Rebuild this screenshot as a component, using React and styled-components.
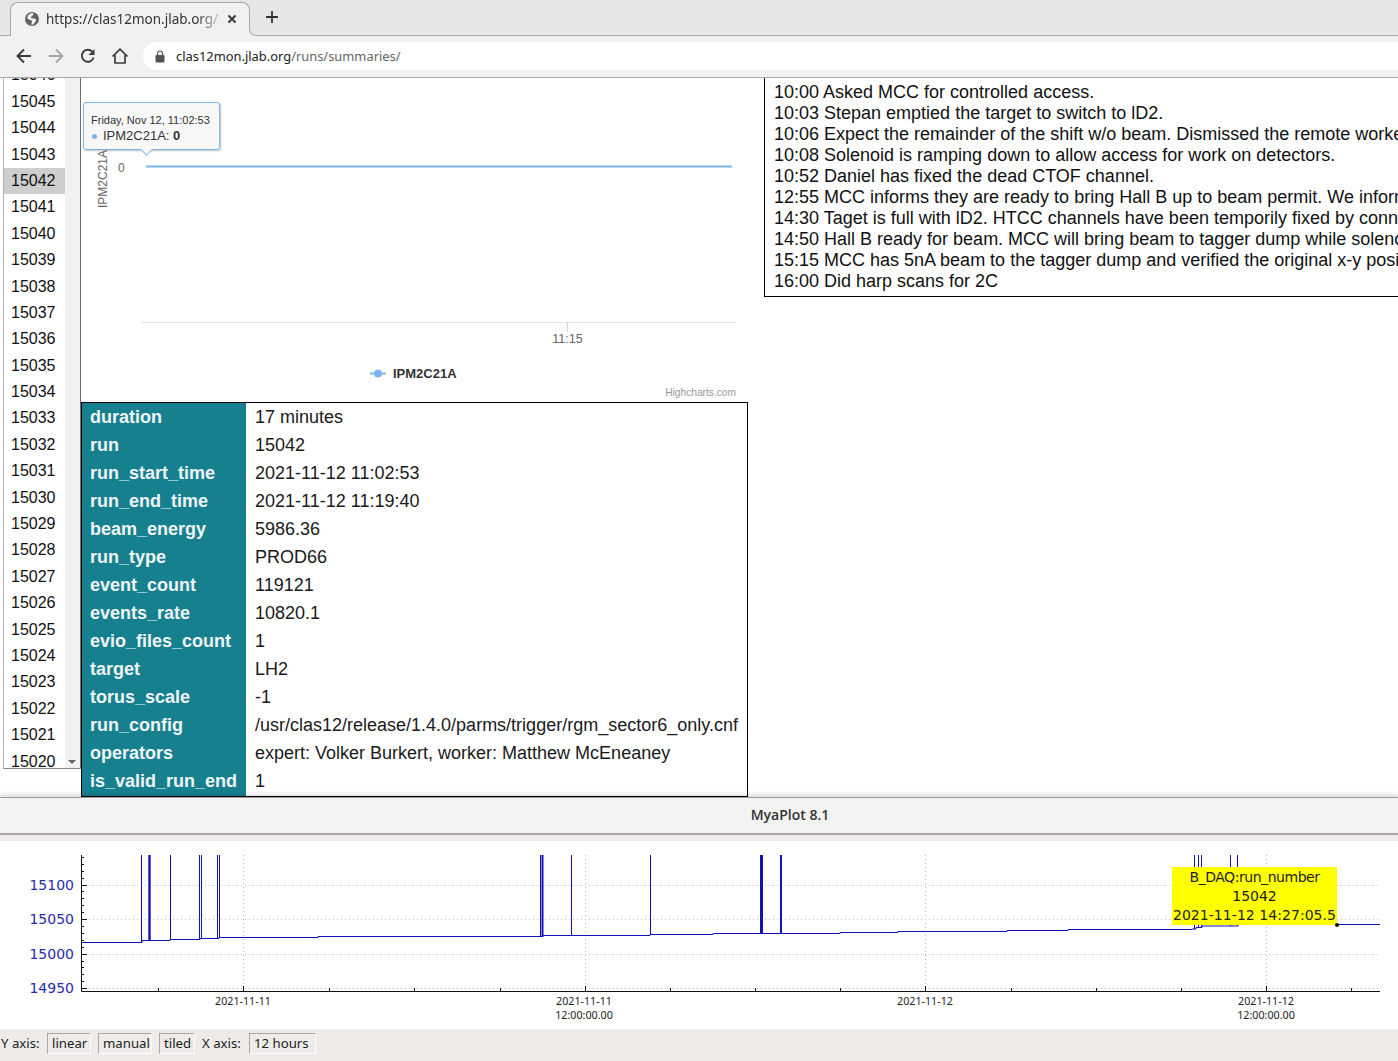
import React from 'react';
import styled, { createGlobalStyle } from 'styled-components';

const GlobalStyle = createGlobalStyle`
  html, body {
    margin: 0;
    padding: 0;
    width: 1398px;
    height: 1061px;
    overflow: hidden;
    background: #fff;
  }
`;

const Page = styled.div`
  width: 1398px;
  height: 1061px;
  display: flex;
  flex-direction: column;
  overflow: hidden;
  font-family: "Liberation Sans", Arial, sans-serif;
`;

/* browser chrome */
const Chrome = styled.div`
  height: 78px;
  flex: none;
  display: flex;
  flex-direction: column;
  background: #f1f1f1;
  border-bottom: 1px solid #a8a8a8;
  box-sizing: border-box;
  font-family: "Noto Sans", sans-serif;
`;

const TabStrip = styled.div`
  height: 36px;
  flex: none;
  display: flex;
  align-items: flex-end;
  padding-left: 10px;
  gap: 16px;
  background: #e6e6e4;
  border-bottom: 1px solid #a9a9a9;
  box-sizing: border-box;
`;

const Tab = styled.div`
  width: 240px;
  height: 34px;
  margin-bottom: -1px;
  box-sizing: border-box;
  display: flex;
  align-items: center;
  padding: 0 6px 2px 13px;
  gap: 6px;
  background: #f1f1f1;
  border: 1px solid #a9a9a9;
  border-bottom: none;
  border-radius: 8px 8px 0 0;
  position: relative;
  &::before {
    content: '';
    position: absolute;
    right: -7px;
    bottom: 0;
    width: 7px;
    height: 7px;
    background: #f1f1f1;
  }
  &::after {
    content: '';
    position: absolute;
    right: -8px;
    bottom: 0;
    width: 7px;
    height: 7px;
    background: #e6e6e4;
    border-left: 1px solid #a9a9a9;
    border-bottom: 1px solid #a9a9a9;
    border-bottom-left-radius: 7px;
  }
`;

const TabTitle = styled.div`
  width: 175px;
  font-size: 13.5px;
  color: #333;
  white-space: nowrap;
  overflow: hidden;
  mask-image: linear-gradient(to right, #000 86%, rgba(0, 0, 0, 0.15) 100%);
`;

const NewTab = styled.div`
  height: 34px;
  box-sizing: border-box;
  padding-bottom: 2px;
  display: flex;
  align-items: center;
`;

const Toolbar = styled.div`
  flex: 1;
  display: flex;
  align-items: center;
  padding: 0 0 1px 15px;
  gap: 14px;
`;

const NavIcon = styled.svg`
  flex: none;
  display: block;
`;

const Omnibox = styled.div`
  flex: 1;
  height: 28px;
  display: flex;
  align-items: center;
  padding-left: 12px;
  gap: 11px;
  background: #fff;
  border-radius: 14px 0 0 14px;
  font-size: 12.9px;
  color: #222;
`;

const UrlPath = styled.span`
  color: #666;
`;

/* web page part */
const WebArea = styled.div`
  height: 719px;
  flex: none;
  display: flex;
  background: #fff;
  overflow: hidden;
`;

const ListFrame = styled.div`
  width: 78px;
  height: 691px;
  flex: none;
  margin-left: 3px;
  box-sizing: border-box;
  display: flex;
  border-left: 1px solid #b5b5b5;
  border-right: 1px solid #6f6f6f;
  border-bottom: 1px solid #8a8a8a;
  overflow: hidden;
  position: relative;
`;

const RunList = styled.div`
  width: 61px;
  flex: none;
  margin-top: -15.6px;
`;

const RunItem = styled.div`
  height: 26.4px;
  line-height: 26.4px;
  padding-left: 7px;
  font-size: 16px;
  color: #111;
  background: ${(p) => (p.$selected ? '#cecece' : 'transparent')};
`;

const ScrollTrack = styled.div`
  flex: 1;
  background: #f1f1f1;
`;

const ScrollArrow = styled.div`
  position: absolute;
  right: 4px;
  bottom: 4px;
  width: 0;
  height: 0;
  border-left: 4px solid transparent;
  border-right: 4px solid transparent;
  border-top: 4px solid #666;
`;

const MiddleColumn = styled.div`
  width: 667px;
  flex: none;
  display: flex;
  flex-direction: column;
`;

const ChartBox = styled.div`
  height: 324px;
  flex: none;
  position: relative;
  background: #fff;
`;

const ChartSvg = styled.svg`
  display: block;
  font-family: "Liberation Sans", Arial, sans-serif;
`;

const Tooltip = styled.div`
  position: absolute;
  left: 2px;
  top: 24px;
  width: 137px;
  height: 48px;
  box-sizing: border-box;
  padding: 11px 0 0 7px;
  background: rgba(247, 247, 247, 0.88);
  border: 1px solid #7cb5ec;
  border-radius: 3px;
  box-shadow: 1px 1px 2px rgba(0, 0, 0, 0.25);
  color: #333;
  &::after {
    content: '';
    position: absolute;
    left: 58px;
    bottom: -5px;
    width: 8px;
    height: 8px;
    background: #f7f7f7;
    border-right: 1px solid #7cb5ec;
    border-bottom: 1px solid #7cb5ec;
    transform: rotate(45deg);
  }
`;

const TooltipDate = styled.div`
  font-size: 11px;
  line-height: 13px;
`;

const TooltipValue = styled.div`
  font-size: 13px;
  line-height: 17px;
  white-space: nowrap;
  &::before {
    content: '';
    display: inline-block;
    width: 5px;
    height: 5px;
    margin: 0 6px 1px 1px;
    border-radius: 50%;
    background: #7cb5ec;
  }
`;

const SummaryTable = styled.table`
  width: 667px;
  flex: none;
  border: 1px solid #000;
  border-collapse: separate;
  border-spacing: 0;
  font-size: 18px;
  color: #1a1a1a;
  tr:last-child td {
    height: 29px;
    padding-bottom: 1px;
  }
`;

const KeyCell = styled.td`
  width: 164px;
  height: 28px;
  padding: 0 8px 0 8px;
  box-sizing: border-box;
  background: #17808f;
  color: #eef6f7;
  font-weight: bold;
  white-space: nowrap;
`;

const ValueCell = styled.td`
  height: 28px;
  padding: 0 9px;
  box-sizing: border-box;
  white-space: nowrap;
`;

const LogBox = styled.div`
  width: 680px;
  height: 219px;
  flex: none;
  margin-left: 16px;
  box-sizing: border-box;
  padding: 4px 0 0 9px;
  border: 1px solid #000;
  border-top: none;
  font-size: 18px;
  line-height: 21px;
  color: #111;
  white-space: nowrap;
  overflow: hidden;
`;

/* MyaPlot window */
const PlotTitle = styled.div`
  height: 36px;
  flex: none;
  box-sizing: border-box;
  padding: 0 0 3px 182px;
  display: flex;
  align-items: center;
  justify-content: center;
  background: #f3f3f3;
  border-top: 1px solid #9a9a9a;
  box-shadow: 0 -3px 4px rgba(0, 0, 0, 0.12);
  position: relative;
  font-family: "Open Sans", sans-serif;
  font-size: 14px;
  font-weight: 600;
  color: #333;
`;

const TitleRule = styled.div`
  height: 2px;
  flex: none;
  background: #a6a6a2;
`;

const PlotBackdrop = styled.div`
  height: 6px;
  flex: none;
  background: #eeebe8;
`;

const PlotArea = styled.div`
  height: 188px;
  flex: none;
  position: relative;
  background: #fff;
`;

const PlotSvg = styled.svg`
  display: block;
  font-family: "DejaVu Sans", sans-serif;
`;

const TickLabel = styled.text`
  font-family: "Noto Sans", sans-serif;
  font-size: 10.7px;
  fill: #222;
  text-anchor: middle;
`;

const Annotation = styled.div`
  position: absolute;
  left: 1172px;
  top: 26px;
  width: 165px;
  height: 58px;
  box-sizing: border-box;
  padding-top: 1px;
  background: #ffff00;
  text-align: center;
  font-family: "DejaVu Sans", sans-serif;
  font-size: 14px;
  line-height: 19px;
  color: #222;
  white-space: nowrap;
`;

const AnnotationLine = styled.div`
  letter-spacing: ${(p) => p.$spacing}px;
`;

const AnnotationDot = styled.div`
  position: absolute;
  left: 1335px;
  top: 82px;
  width: 4px;
  height: 4px;
  border-radius: 50%;
  background: #111;
`;

const StatusBar = styled.div`
  flex: 1;
  display: flex;
  align-items: center;
  padding: 0 0 4px 1px;
  background: #eeebe8;
  font-family: "Noto Sans", sans-serif;
  font-size: 13.2px;
  color: #222;
`;

const StatusLabel = styled.span`
  width: ${(p) => p.$width}px;
  flex: none;
`;

const StatusField = styled.div`
  width: ${(p) => p.$width}px;
  height: 21px;
  flex: none;
  box-sizing: border-box;
  padding-left: 4px;
  margin-right: 7px;
  line-height: 19px;
  white-space: nowrap;
  border: 1px solid #fff;
  border-top-color: #a9a8a5;
  border-left-color: #a9a8a5;
`;

const runs = [];
for (let r = 15046; r >= 15020; r--) runs.push(r);

const summary = [
  ['duration', '17 minutes'],
  ['run', '15042'],
  ['run_start_time', '2021-11-12 11:02:53'],
  ['run_end_time', '2021-11-12 11:19:40'],
  ['beam_energy', '5986.36'],
  ['run_type', 'PROD66'],
  ['event_count', '119121'],
  ['events_rate', '10820.1'],
  ['evio_files_count', '1'],
  ['target', 'LH2'],
  ['torus_scale', '-1'],
  ['run_config', '/usr/clas12/release/1.4.0/parms/trigger/rgm_sector6_only.cnf'],
  ['operators', 'expert: Volker Burkert, worker: Matthew McEneaney'],
  ['is_valid_run_end', '1'],
];

const logLines = [
  '10:00 Asked MCC for controlled access.',
  '10:03 Stepan emptied the target to switch to lD2.',
  '10:06 Expect the remainder of the shift w/o beam. Dismissed the remote workers.',
  '10:08 Solenoid is ramping down to allow access for work on detectors.',
  '10:52 Daniel has fixed the dead CTOF channel.',
  '12:55 MCC informs they are ready to bring Hall B up to beam permit. We informed them.',
  '14:30 Taget is full with lD2. HTCC channels have been temporily fixed by connecting them.',
  '14:50 Hall B ready for beam. MCC will bring beam to tagger dump while solenoid ramps.',
  '15:15 MCC has 5nA beam to the tagger dump and verified the original x-y positions.',
  '16:00 Did harp scans for 2C',
];

// mya plot data, in px inside the plot area
const PLOT_TOP = 14;
const PLOT_BOTTOM = 150;
const PLOT_LEFT = 81;
const PLOT_RIGHT = 1380;
const LINE_COLOR = '#1212b4';
const yLabels = [
  ['15100', 44],
  ['15050', 78],
  ['15000', 113],
  ['14950', 147],
];
const majorX = [243, 585, 925, 1266];
const minorX = [158, 329, 414, 500, 670, 755, 840, 1011, 1096, 1181, 1351];
const steps = [
  [81, 101.5], [141, 101.5], [142, 99.5], [170, 98.5], [200, 97.5], [219, 96.5], [318, 95.5],
  [543, 94.5], [650, 93.5], [713, 92.5], [840, 91.5], [898, 90.5], [1007, 89.5], [1068, 88.5],
  [1192, 88], [1196, 86.5], [1202, 85], [1238, 84],
];
const spikes = [
  [141.5, 1], [149.5, 2.4], [170.5, 1], [199.5, 1], [201.5, 1], [217.5, 1], [219.5, 1],
  [540.5, 1], [542.5, 2], [571.5, 1], [650.5, 1], [761.5, 3], [781, 2], [1194.5, 1],
  [1198.5, 1], [1201.5, 1], [1230.5, 1], [1237.5, 1],
];

function stepPath() {
  let d = '';
  steps.forEach(([x, y], i) => {
    if (i === 0) d += `M${x} ${y}`;
    else d += `H${x}V${y}`;
  });
  return d;
}

// y of the run number line at x, a spike stops there
function baseAt(x) {
  let y = steps[0][1];
  steps.forEach((s) => {
    if (s[0] <= x) y = s[1];
  });
  return y;
}

function yMinorTicks() {
  const out = [];
  for (let y = PLOT_TOP + 2; y < PLOT_BOTTOM; y += 6.9) out.push(y);
  return out;
}

function BrowserChrome() {
  return (
    <Chrome>
      <TabStrip>
        <Tab>
          <NavIcon width="16" height="16" viewBox="0 0 16 16">
            <circle cx="8" cy="8" r="7" fill="#5f6368" />
            <path d="M7 2.2 4 4.2 3.2 7.2 6 9l1.6.2.4 2-1 2.4 2 .2 2.4-3 1-1.8-2-1.4-3-.4-.5-1.5 1.6-.7L8.8 4 10 2.6z" fill="#f1f1f1" />
          </NavIcon>
          <TabTitle>https://clas12mon.jlab.org/</TabTitle>
          <NavIcon width="10" height="10" viewBox="0 0 10 10">
            <path d="M1.5 1.5l7 7M8.5 1.5l-7 7" stroke="#333" strokeWidth="1.8" />
          </NavIcon>
        </Tab>
        <NewTab>
          <NavIcon width="12" height="12" viewBox="0 0 12 12">
            <path d="M6 0v12M0 6h12" stroke="#333" strokeWidth="1.8" />
          </NavIcon>
        </NewTab>
      </TabStrip>
      <Toolbar>
        <NavIcon width="18" height="18" viewBox="0 0 18 18">
          <path d="M16 9H3M9 2.5 2.5 9 9 15.5" fill="none" stroke="#3c3c3c" strokeWidth="1.9" />
        </NavIcon>
        <NavIcon width="18" height="18" viewBox="0 0 18 18">
          <path d="M2 9h13M9 2.5 15.5 9 9 15.5" fill="none" stroke="#a5a5a5" strokeWidth="1.9" />
        </NavIcon>
        <NavIcon width="18" height="18" viewBox="0 0 18 18">
          <path d="M14.6 10.5A6 6 0 1 1 13.2 4.6" fill="none" stroke="#3c3c3c" strokeWidth="1.9" />
          <path d="M15.5 2v6h-6z" fill="#3c3c3c" />
        </NavIcon>
        <NavIcon width="18" height="18" viewBox="0 0 18 18">
          <path d="M1.5 9.5 9 2.2l7.5 7.3M4 8v8h10V8" fill="none" stroke="#3c3c3c" strokeWidth="1.7" />
        </NavIcon>
        <Omnibox>
          <NavIcon width="10" height="13" viewBox="0 0 10 13">
            <path d="M2.5 5V3.5a2.5 2.5 0 0 1 5 0V5" fill="none" stroke="#555" strokeWidth="1.2" />
            <rect x="0.5" y="5" width="9" height="7.5" rx="1" fill="#555" />
          </NavIcon>
          <span>
            clas12mon.jlab.org<UrlPath>/runs/summaries/</UrlPath>
          </span>
        </Omnibox>
      </Toolbar>
    </Chrome>
  );
}

function RunChart() {
  return (
    <ChartBox>
      <ChartSvg width="667" height="324" viewBox="0 0 667 324">
        <text transform="translate(25.5 130) rotate(-90)" fontSize="12" fill="#666">IPM2C21A</text>
        <text x="37" y="94" fontSize="12" fill="#666">0</text>
        <path d="M65 88.5H651" stroke="#7cb5ec" strokeWidth="2" />
        <path d="M61 244.5H655" stroke="#e2e4e8" strokeWidth="1" />
        <path d="M486.5 244V254" stroke="#ccd6eb" strokeWidth="1" />
        <text x="486.5" y="265" fontSize="12.5" fill="#666" textAnchor="middle">11:15</text>
        <path d="M289 295.5H305" stroke="#7cb5ec" strokeWidth="2" />
        <circle cx="297" cy="295.5" r="4" fill="#7cb5ec" />
        <text x="312" y="300" fontSize="13" fontWeight="bold" fill="#333">IPM2C21A</text>
        <text x="655" y="318" fontSize="10.2" fill="#999" textAnchor="end">Highcharts.com</text>
      </ChartSvg>
      <Tooltip>
        <TooltipDate>Friday, Nov 12, 11:02:53</TooltipDate>
        <TooltipValue>IPM2C21A: <b>0</b></TooltipValue>
      </Tooltip>
    </ChartBox>
  );
}

function MyaChart() {
  return (
    <PlotArea>
      <PlotSvg width="1398" height="188" viewBox="0 0 1398 188">
        {yLabels.map(([label, y]) => (
          <g key={label}>
            <path d={`M${PLOT_LEFT} ${y + 0.5}H${PLOT_RIGHT}`} stroke="#bdbdbd" strokeDasharray="1 3" />
            <path d={`M${PLOT_LEFT} ${y + 0.5}h6`} stroke="#111" />
            <text x="74" y={y + 5} fontSize="14" fill="#2a2ab0" textAnchor="end">{label}</text>
          </g>
        ))}
        {majorX.map((x) => (
          <path key={x} d={`M${x + 0.5} ${PLOT_TOP}V${PLOT_BOTTOM}`} stroke="#bdbdbd" strokeDasharray="1 3" />
        ))}
        {yMinorTicks().map((y) => (
          <path key={y} d={`M${PLOT_LEFT} ${Math.round(y) + 0.5}h3`} stroke="#111" />
        ))}
        <path d={stepPath()} fill="none" stroke={LINE_COLOR} strokeWidth="1" />
        <path d="M1337 83.5H1380" fill="none" stroke={LINE_COLOR} strokeWidth="1" />
        {spikes.map(([x, w]) => (
          <path key={x} d={`M${x} ${PLOT_TOP}V${baseAt(x)}`} stroke={LINE_COLOR} strokeWidth={w} />
        ))}
        <path d={`M${PLOT_LEFT + 0.5} ${PLOT_TOP}V${PLOT_BOTTOM + 0.5}H${PLOT_RIGHT}`} fill="none" stroke="#111" />
        {majorX.map((x) => (
          <path key={x} d={`M${x + 0.5} ${PLOT_BOTTOM}v-5`} stroke="#111" />
        ))}
        {minorX.map((x) => (
          <path key={x} d={`M${x + 0.5} ${PLOT_BOTTOM}v-3`} stroke="#111" />
        ))}
        <TickLabel x="243" y="164">2021-11-11</TickLabel>
        <TickLabel x="584" y="164">2021-11-11</TickLabel>
        <TickLabel x="584" y="178">12:00:00.00</TickLabel>
        <TickLabel x="925" y="164">2021-11-12</TickLabel>
        <TickLabel x="1266" y="164">2021-11-12</TickLabel>
        <TickLabel x="1266" y="178">12:00:00.00</TickLabel>
      </PlotSvg>
      <Annotation>
        <AnnotationLine $spacing={-0.45}>B_DAQ:run_number</AnnotationLine>
        <AnnotationLine $spacing={0}>15042</AnnotationLine>
        <AnnotationLine $spacing={0.05}>2021-11-12 14:27:05.5</AnnotationLine>
      </Annotation>
      <AnnotationDot />
    </PlotArea>
  );
}

export default function App() {
  return (
    <Page>
      <GlobalStyle />
      <BrowserChrome />
      <WebArea>
        <ListFrame>
          <RunList>
            {runs.map((r) => (
              <RunItem key={r} $selected={r === 15042}>{r}</RunItem>
            ))}
          </RunList>
          <ScrollTrack />
          <ScrollArrow />
        </ListFrame>
        <MiddleColumn>
          <RunChart />
          <SummaryTable>
            <tbody>
              {summary.map(([key, value]) => (
                <tr key={key}>
                  <KeyCell>{key}</KeyCell>
                  <ValueCell>{value}</ValueCell>
                </tr>
              ))}
            </tbody>
          </SummaryTable>
        </MiddleColumn>
        <LogBox>
          {logLines.map((line) => (
            <div key={line}>{line}</div>
          ))}
        </LogBox>
      </WebArea>
      <PlotTitle>MyaPlot 8.1</PlotTitle>
      <TitleRule />
      <PlotBackdrop />
      <MyaChart />
      <StatusBar>
        <StatusLabel $width={46}>Y axis:</StatusLabel>
        <StatusField $width={44}>linear</StatusField>
        <StatusField $width={54}>manual</StatusField>
        <StatusField $width={36}>tiled</StatusField>
        <StatusLabel $width={47}>X axis:</StatusLabel>
        <StatusField $width={67}>12 hours</StatusField>
      </StatusBar>
    </Page>
  );
}
